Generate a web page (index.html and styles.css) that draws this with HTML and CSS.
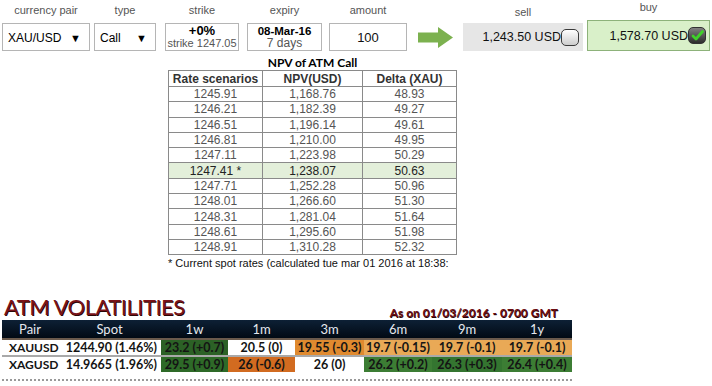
FILE: index.html
```html
<!DOCTYPE html>
<html>
<head>
<meta charset="utf-8">
<link rel="stylesheet" href="styles.css">
</head>
<body>
<div class="page">
  <div class="topbar">
    <div class="field f-pair">
      <div class="label">currency pair</div>
      <div class="box select"><span>XAU/USD</span><span class="caret">▼</span></div>
    </div>
    <div class="field f-type">
      <div class="label">type</div>
      <div class="box select"><span>Call</span><span class="caret">▼</span></div>
    </div>
    <div class="field f-strike">
      <div class="label">strike</div>
      <div class="box stack"><b>+0%</b><span class="sub">strike 1247.05</span></div>
    </div>
    <div class="field f-expiry">
      <div class="label">expiry</div>
      <div class="box stack"><b class="exp">08-Mar-16</b><span class="sub2">7 days</span></div>
    </div>
    <div class="field f-amount">
      <div class="label">amount</div>
      <div class="box amount">100</div>
    </div>
    <div class="arrow">
      <svg width="35" height="21" viewBox="0 0 35 21"><path d="M0 5.5H20V0L35 10.5L20 21V15.5H0Z" fill="#7cb14f"/></svg>
    </div>
    <div class="field f-sell">
      <div class="label sell-label">sell</div>
      <div class="box price sell">1,243.50 USD<span class="chk"></span></div>
    </div>
    <div class="field f-buy">
      <div class="label buy-label">buy</div>
      <div class="box price buy">1,578.70 USD<span class="chk on"><svg width="15" height="15" viewBox="0 0 15 15"><path d="M3 8L6 11L12.5 3.5" fill="none" stroke="#3fd12a" stroke-width="2.8" stroke-linecap="round" stroke-linejoin="round"/></svg></span></div>
    </div>
  </div>

  <div class="npv">
    <div class="npv-title">NPV of ATM Call</div>
    <table class="npv-table">
      <thead>
        <tr><th>Rate scenarios</th><th>NPV(USD)</th><th>Delta (XAU)</th></tr>
      </thead>
      <tbody>
        <tr><td>1245.91</td><td>1,168.76</td><td>48.93</td></tr>
        <tr><td>1246.21</td><td>1,182.39</td><td>49.27</td></tr>
        <tr><td>1246.51</td><td>1,196.14</td><td>49.61</td></tr>
        <tr><td>1246.81</td><td>1,210.00</td><td>49.95</td></tr>
        <tr><td>1247.11</td><td>1,223.98</td><td>50.29</td></tr>
        <tr class="current"><td>1247.41 *</td><td>1,238.07</td><td>50.63</td></tr>
        <tr><td>1247.71</td><td>1,252.28</td><td>50.96</td></tr>
        <tr><td>1248.01</td><td>1,266.60</td><td>51.30</td></tr>
        <tr><td>1248.31</td><td>1,281.04</td><td>51.64</td></tr>
        <tr><td>1248.61</td><td>1,295.60</td><td>51.98</td></tr>
        <tr><td>1248.91</td><td>1,310.28</td><td>52.32</td></tr>
      </tbody>
    </table>
    <div class="note">* Current spot rates (calculated tue mar 01 2016 at 18:38:</div>
  </div>

  <div class="vol">
    <div class="vol-head">
      <div class="vol-title">ATM VOLATILITIES</div>
      <div class="vol-date">As on 01/03/2016 - 0700 GMT</div>
    </div>
    <table class="vol-table">
      <colgroup>
        <col class="c-pair"><col class="c-spot"><col class="c-67"><col class="c-67"><col class="c-69"><col class="c-68"><col class="c-70"><col class="c-70">
      </colgroup>
      <thead>
        <tr><th>Pair</th><th>Spot</th><th>1w</th><th>1m</th><th>3m</th><th>6m</th><th>9m</th><th>1y</th></tr>
      </thead>
      <tbody>
        <tr class="r1"><td class="pair">XAUUSD</td><td class="spot">1244.90 (1.46%)</td><td class="dg">23.2 (+0.7)</td><td>20.5 (0)</td><td class="or">19.55 (-0.3)</td><td class="lo">19.7 (-0.15)</td><td class="lo">19.7 (-0.1)</td><td class="lo">19.7 (-0.1)</td></tr>
        <tr class="r2"><td class="pair">XAGUSD</td><td class="spot">14.9665 (1.96%)</td><td class="dg2">29.5 (+0.9)</td><td class="do">26 (-0.6)</td><td>26 (0)</td><td class="mg">26.2 (+0.2)</td><td class="mg2">26.3 (+0.3)</td><td class="mg">26.4 (+0.4)</td></tr>
      </tbody>
    </table>
    <div class="dots"></div>
  </div>
</div>
</body>
</html>
```

FILE: styles.css
```css
* { box-sizing: border-box; }
html, body { margin: 0; padding: 0; background: #fff; }
body { font-family: "Liberation Sans", Arial, sans-serif; color: #000; width: 712px; height: 386px; overflow: hidden; }
.page { padding: 0 2px; }

.topbar { display: flex; align-items: flex-end; height: 51px; }
.field { display: flex; flex-direction: column; align-items: stretch; flex-shrink: 0; }
.label { font-size: 11px; color: #555; text-align: center; height: 21px; line-height: 15px; padding-top: 1px; }
.sell-label { padding-top: 3px; }
.buy-label { height: 19px; padding-top: 0; line-height: 12px; }
.box { border: 1px solid #b5b5b5; height: 28px; background: #fff; }
.f-pair { width: 88px; }
.f-type { width: 62px; margin-left: 4px; }
.f-strike { width: 74px; margin-left: 9px; }
.f-expiry { width: 75px; margin-left: 8px; }
.f-amount { width: 78px; margin-left: 7px; }
.f-sell { width: 120px; }
.f-buy { width: 123px; margin-left: 4px; }

.select { display: flex; align-items: center; justify-content: space-between; padding: 1px 8px 0 5px; font-size: 12px; color: #000; }
.caret { font-size: 11px; }
.stack { display: flex; flex-direction: column; align-items: center; justify-content: center; line-height: 12px; }
.stack b { font-size: 13px; line-height: 12px; }
.stack b.exp { font-size: 11.5px; }
.sub { font-size: 11px; color: #555; }
.sub2 { font-size: 12px; color: #555; }
.amount { display: flex; align-items: center; justify-content: center; font-size: 13px; color: #111; }

.arrow { width: 35px; height: 21px; flex-shrink: 0; display: flex; margin: 0 10px 3px 11px; }

.price { display: flex; align-items: center; justify-content: flex-end; font-size: 12.5px; color: #111; padding-right: 3px; }
.sell { background: #e6e6e6; border-color: #e6e6e6; height: 28px; }
.buy { background: #d9f0c9; border: 1px solid #8db27a; height: 31px; padding-right: 3px; }
.chk { width: 18px; height: 17px; border-radius: 5px; border: 1px solid #3a3a3a; background: linear-gradient(#ffffff, #cdcdcd); display: inline-flex; align-items: center; justify-content: center; margin-left: 0; }
.chk.on { background: linear-gradient(#808080, #2d2d2d); border-color: #333; }

.npv { margin-left: 166px; width: 292px; margin-top: 5px; }
.npv-title { font-family: Lato, "Liberation Sans", sans-serif; font-weight: bold; font-size: 12px; text-align: center; width: 289px; line-height: 14px; }
.npv-table { border-collapse: collapse; width: 289px; font-size: 12px; }
.npv-table th, .npv-table td { border: 1px solid #8a8a8a; text-align: center; padding: 0; height: 15.3px; line-height: 14px; }
.npv-table th { color: #333; font-weight: bold; height: 16px; }
.npv-table th:nth-child(1) { width: 94px; }
.npv-table th:nth-child(2) { width: 100px; }
.npv-table td { color: #555; }
.npv-table tr.current td { background: #e3efda; color: #222; }
.note { font-size: 11px; white-space: nowrap; margin-top: 2px; color: #111; }

.vol { margin-top: 25px; width: 570px; }
.vol-head { display: flex; justify-content: space-between; align-items: flex-end; height: 24px; }
.vol-title { font-family: Lato, "DejaVu Sans", sans-serif; font-size: 22px; letter-spacing: -0.5px; color: #7a1419; text-shadow: 0.8px 0.8px 0 #2a0505; line-height: 22px; padding-left: 2px; }
.vol-date { font-family: Lato, "Liberation Sans", sans-serif; font-weight: bold; font-size: 12px; color: #6d0f14; text-shadow: 0.5px 0.5px 0 #2a0505; line-height: 14px; padding-right: 14px; margin-bottom: -2px; }
.vol-table { border-collapse: collapse; width: 570px; table-layout: fixed; font-family: Lato, "Liberation Sans", sans-serif; font-size: 12.5px; margin-top: 2px; }
.c-pair { width: 56px; }
.c-spot { width: 103px; }
.c-67 { width: 67px; }
.c-68 { width: 68px; }
.c-69 { width: 69px; }
.c-70 { width: 70px; }
.vol-table th { background: linear-gradient(#0d2035, #010a14); color: #e4e8ee; font-weight: normal; font-size: 13px; height: 19px; padding: 0; text-align: center; border-bottom: 2px solid #6a5a4c; }
.vol-table td { padding: 0; height: 16px; text-align: center; font-weight: bold; color: #141414; white-space: nowrap; }
.vol-table tr.r1 td { border-bottom: 2px solid #a9a9a9; }
.vol-table td.pair { text-align: left; padding-left: 7px; font-size: 12px; }
.vol-table td.spot { text-align: right; padding-right: 4px; }
.dg { background: #2c6126; }
.dg2 { background: #2e6a28; }
.or { background: #e08a2f; }
.lo { background: #e9a956; }
.do { background: #d26b20; }
.mg { background: #3c7d34; }
.mg2 { background: #347530; }
.dots { height: 0; border-top: 2px dotted #999; margin-top: 7px; }
```
